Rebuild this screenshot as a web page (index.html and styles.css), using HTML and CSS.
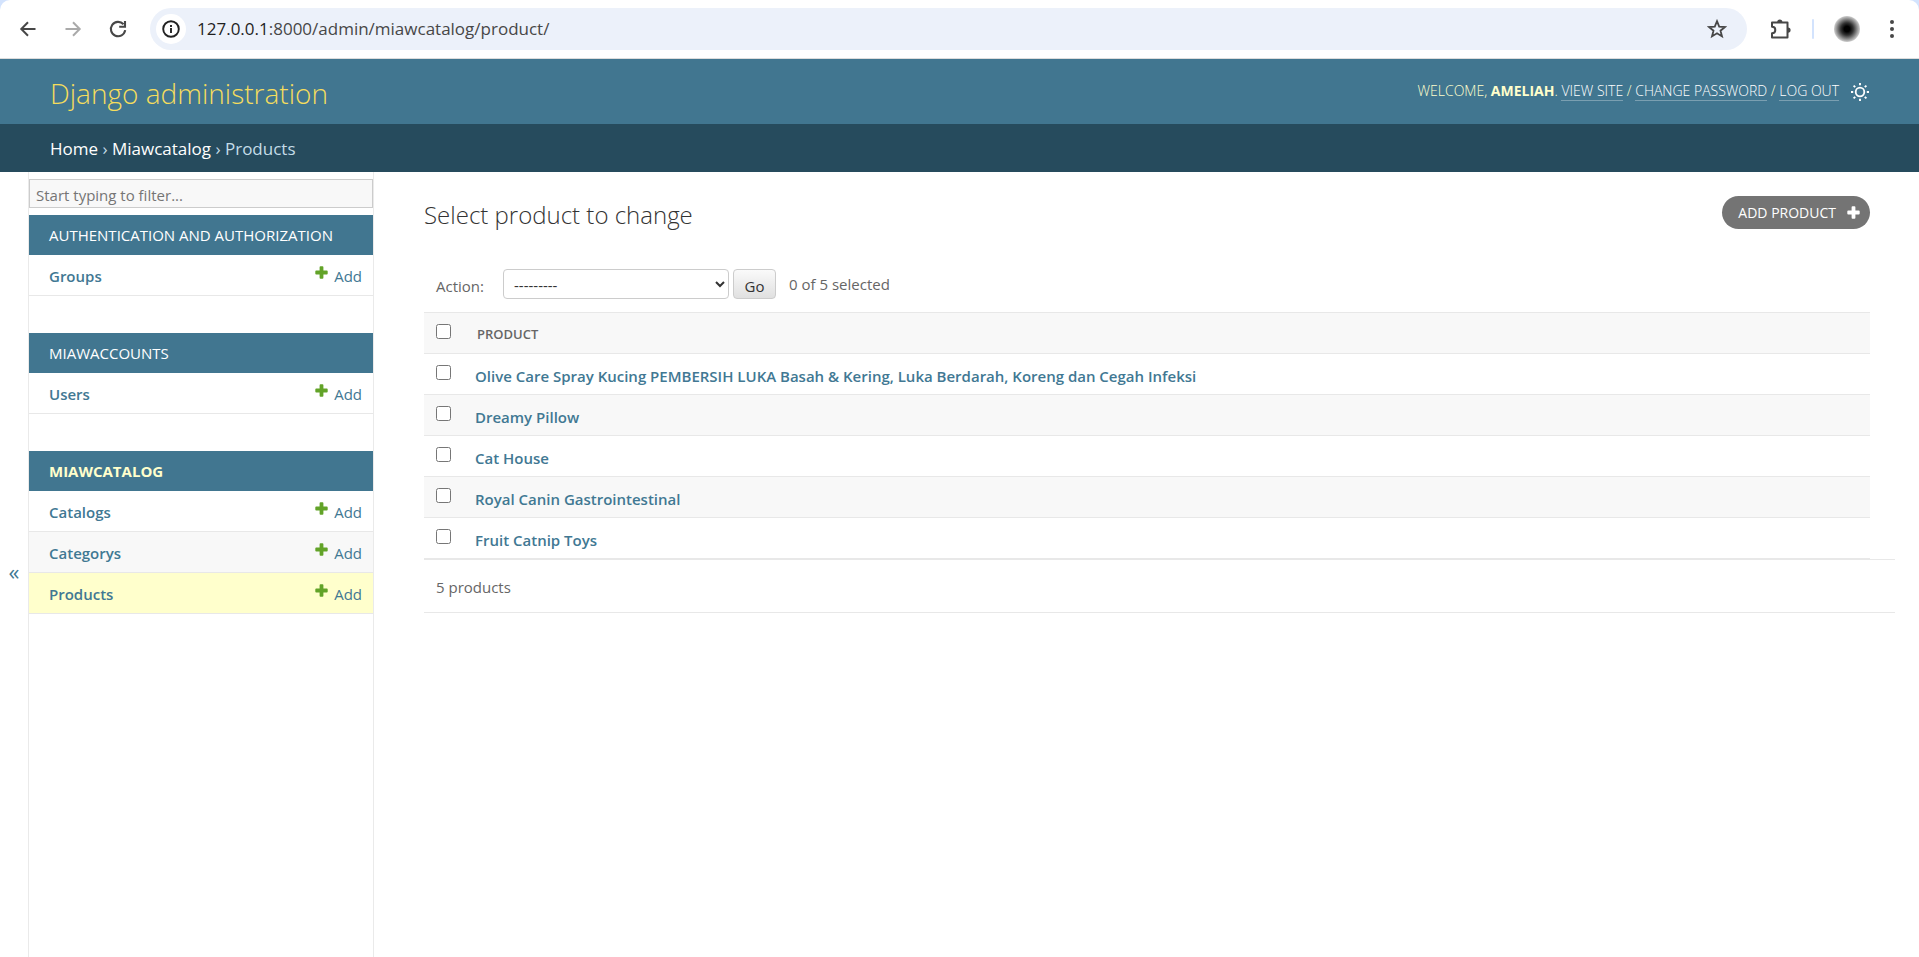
FILE: index.html
```html
<!DOCTYPE html>
<html lang="en">
<head>
<meta charset="utf-8">
<title>Select product to change | Django administration</title>
<link rel="stylesheet" href="styles.css">
</head>
<body>
<svg class="defs" aria-hidden="true">
  <symbol id="plus" viewBox="0 0 13 13"><path d="M4.6 1.2Q4.6.3 5.5.3h2q.9 0 .9.9v3.4h3.4q.9 0 .9.9v2q0 .9-.9.9H8.400v3.400q0 .9-.9.9h-2q-.9 0-.9-.9V8.400H1.200q-.9 0-.9-.9v-2q0-.9.9-.9h3.400z" fill="currentColor"/></symbol>
</svg>
<div class="browser">
  <div class="toolbar">
    <button class="tool" aria-label="Back"><svg viewBox="0 0 20 20" width="20" height="20"><path d="M17.500 10H3.500M10 3.300L3.300 10l6.700 6.700" fill="none" stroke="#474747" stroke-width="2"/></svg></button>
    <button class="tool" aria-label="Forward"><svg viewBox="0 0 20 20" width="20" height="20"><path d="M2.500 10h14M10 3.300l6.700 6.700-6.700 6.700" fill="none" stroke="#aaa" stroke-width="2"/></svg></button>
    <button class="tool" aria-label="Reload"><svg viewBox="0 0 20 20" width="20" height="20"><path d="M17.200 11.200A7.200 7.200 0 1 1 15.500 5.300M17 2v5.800h-5.800" fill="none" stroke="#474747" stroke-width="2.100"/></svg></button>
    <div class="omnibox">
      <button class="site-info" aria-label="Site information"><svg viewBox="0 0 18 18" width="18" height="18"><circle cx="9" cy="9" r="7.800" fill="none" stroke="#222" stroke-width="1.900"/><path d="M9 8v5M9 5v1.900" stroke="#222" stroke-width="1.900"/></svg></button>
      <p class="url"><b>127.0.0.1</b>:8000/admin/miawcatalog/product/</p>
      <button class="tool star" aria-label="Bookmark"><svg viewBox="0 0 20 20" width="20" height="20"><path d="M10 2.200l2.200 5.400 5.800.4-4.500 3.700 1.500 5.700-5-3.100-5 3.100 1.500-5.700L2 8l5.800-.4z" fill="none" stroke="#474747" stroke-width="1.800"/></svg></button>
    </div>
    <button class="tool ext" aria-label="Extensions"><svg viewBox="0 0 22 22" width="22" height="22"><path d="M2 4.500h15.500v15H2v-4.300c2 0 3.300-1.300 3.300-3.200S4 8.800 2 8.800z" fill="none" stroke="#474747" stroke-width="2" stroke-linejoin="round"/><path d="M7.200 4a2.600 2.600 0 0 1 5.200 0zM18 9.500a2.600 2.600 0 0 1 0 5.200z" fill="#474747"/></svg></button>
    <span class="separator"></span>
    <button class="avatar" aria-label="Profile"></button>
    <button class="tool menu" aria-label="Menu"><svg viewBox="0 0 20 20" width="20" height="20" fill="#474747"><circle cx="10" cy="3" r="2"/><circle cx="10" cy="10" r="2"/><circle cx="10" cy="17" r="2"/></svg></button>
  </div>
</div>
<header class="header">
  <a class="brand" href="#">Django administration</a>
  <div class="user-tools">
    <p>Welcome, <strong>ameliah</strong>. <a href="#">View site</a> / <a href="#">Change password</a> / <a href="#">Log out</a></p>
    <button class="theme" aria-label="Toggle theme"><svg viewBox="0 0 20 20" width="20" height="20"><circle cx="10" cy="10" r="4.300" fill="none" stroke="#fff" stroke-width="1.800"/><path d="M10 1v2.200M10 16.800V19M1 10h2.200M16.800 10H19M3.600 3.600l1.600 1.600M14.800 14.800l1.600 1.600M3.600 16.400l1.600-1.600M14.800 5.200l1.600-1.600" stroke="#fff" stroke-width="1.900"/></svg></button>
  </div>
</header>
<nav class="breadcrumbs" aria-label="Breadcrumbs"><a href="#">Home</a> › <a href="#">Miawcatalog</a> › Products</nav>
<div class="main">
  <button class="toggle" aria-label="Toggle navigation">«</button>
  <nav class="sidebar" aria-label="Sidebar">
    <input class="filter" type="search" placeholder="Start typing to filter..." aria-label="Filter navigation items">
    <section class="app">
      <h2><a href="#">Authentication and Authorization</a></h2>
      <ul>
        <li><a class="model" href="#">Groups</a><a class="add" href="#"><svg width="13" height="13"><use href="#plus"/></svg>Add</a></li>
      </ul>
    </section>
    <section class="app">
      <h2><a href="#">Miawaccounts</a></h2>
      <ul>
        <li><a class="model" href="#">Users</a><a class="add" href="#"><svg width="13" height="13"><use href="#plus"/></svg>Add</a></li>
      </ul>
    </section>
    <section class="app active">
      <h2><a href="#">Miawcatalog</a></h2>
      <ul>
        <li><a class="model" href="#">Catalogs</a><a class="add" href="#"><svg width="13" height="13"><use href="#plus"/></svg>Add</a></li>
        <li><a class="model" href="#">Categorys</a><a class="add" href="#"><svg width="13" height="13"><use href="#plus"/></svg>Add</a></li>
        <li class="current"><a class="model" href="#">Products</a><a class="add" href="#"><svg width="13" height="13"><use href="#plus"/></svg>Add</a></li>
      </ul>
    </section>
  </nav>
  <main class="content">
    <div class="title-row">
      <h1>Select product to change</h1>
      <a class="add-product" href="#">Add product<svg width="13" height="13"><use href="#plus"/></svg></a>
    </div>
    <form class="changelist">
      <div class="actions">
        <label for="action">Action:</label>
        <select id="action"><option>---------</option></select>
        <button type="button" class="go">Go</button>
        <span class="count">0 of 5 selected</span>
      </div>
      <table>
        <thead><tr><th class="check"><input type="checkbox" aria-label="Select all"></th><th scope="col">Product</th></tr></thead>
        <tbody>
          <tr><td class="check"><input type="checkbox" aria-label="Select Olive Care Spray"></td><td><a href="#">Olive Care Spray Kucing PEMBERSIH LUKA Basah &amp; Kering, Luka Berdarah, Koreng dan Cegah Infeksi</a></td></tr>
          <tr><td class="check"><input type="checkbox" aria-label="Select Dreamy Pillow"></td><td><a href="#">Dreamy Pillow</a></td></tr>
          <tr><td class="check"><input type="checkbox" aria-label="Select Cat House"></td><td><a href="#">Cat House</a></td></tr>
          <tr><td class="check"><input type="checkbox" aria-label="Select Royal Canin Gastrointestinal"></td><td><a href="#">Royal Canin Gastrointestinal</a></td></tr>
          <tr><td class="check"><input type="checkbox" aria-label="Select Fruit Catnip Toys"></td><td><a href="#">Fruit Catnip Toys</a></td></tr>
        </tbody>
      </table>
      <p class="paginator">5 products</p>
    </form>
  </main>
</div>
</body>
</html>
```
FILE: styles.css
```css
* { box-sizing: border-box; }
body {
  margin: 0;
  min-height: 100vh;
  display: flex;
  flex-direction: column;
  background: #fff;
  color: #666;
  font: 15px/20px "Open Sans", "Noto Sans", sans-serif;
}
h1, h2, p, ul { margin: 0; padding: 0; }
ul { list-style: none; }
a { color: #417893; text-decoration: none; }
button { font: inherit; border: 0; padding: 0; background: none; cursor: pointer; }
svg { display: block; flex: none; }
.defs { position: absolute; width: 0; height: 0; }

/* Browser toolbar */
.browser { background: #d3e3fd; }
.toolbar {
  display: flex;
  align-items: center;
  height: 59px;
  padding: 0 17px 0 18px;
  background: #fff;
  border-bottom: 1px solid #dcdcdc;
  border-radius: 10px 10px 0 0;
}
.tool { margin-right: 25px; }
.omnibox {
  flex: 1;
  display: flex;
  align-items: center;
  height: 42px;
  margin: 0 23px 0 -3px;
  padding: 0 20px 0 6px;
  border-radius: 21px;
  background: #ecf1fa;
}
.site-info {
  display: grid;
  place-items: center;
  width: 30px;
  height: 30px;
  margin-right: 11px;
  border-radius: 50%;
  background: #fff;
}
.url { flex: 1; font-size: 17px; color: #474747; }
.url b { font-weight: 400; color: #1f1f1f; }
.star { margin: 0; }
.ext { margin-right: 20px; }
.separator { width: 2px; height: 20px; margin-right: 20px; background: #d3e3fd; border-radius: 1px; }
.avatar {
  width: 26px;
  height: 26px;
  margin-right: 22px;
  border-radius: 50%;
  background: radial-gradient(circle, #000 15%, #333 34%, #888 54%, #ccc 70%);
}
.menu { margin: 0; }

/* Page header */
.header {
  display: flex;
  align-items: center;
  justify-content: space-between;
  height: 65px;
  padding: 0 49px 0 50px;
  background: #417690;
  color: #ffc;
}
.brand { padding-top: 2px; color: #f5dd5d; font-size: 28px; line-height: 36px; font-weight: 300; }
.user-tools {
  display: flex;
  align-items: center;
  gap: 11px;
  font-size: 14px;
  font-weight: 300;
  line-height: 16px;
  text-transform: uppercase;
}
.user-tools p { padding-bottom: 2px; }
.user-tools strong { font-weight: 700; }
.user-tools a { color: #fff; border-bottom: 1px solid #7a9fb1; }
.breadcrumbs {
  padding: 15px 50px 13px;
  background: #264b5d;
  color: #c4dce8;
  font-size: 17px;
}
.breadcrumbs a { color: #fff; }

/* Sidebar */
.main { flex: 1; display: flex; }
.toggle { width: 28px; padding-top: 12px; color: #417893; font-size: 22px; }
.sidebar {
  width: 346px;
  flex: none;
  padding-top: 7px;
  border: solid #eaeaea;
  border-width: 0 1px;
}
.filter {
  display: block;
  width: 100%;
  height: 29px;
  margin-bottom: 7px;
  padding: 2px 6px 0;
  border: 1px solid #ccc;
  border-radius: 0;
  background: #f8f8f8;
  font: inherit;
  appearance: none;
}
.filter::placeholder { color: #757575; }
.app { margin-bottom: 37px; }
.app h2 {
  padding: 10px 20px;
  background: #417690;
  font-size: 15px;
  font-weight: 400;
  text-transform: uppercase;
}
.app h2 a { color: #fff; }
.app.active h2 { font-weight: 700; }
.app.active h2 a { color: #ffc; }
.app li {
  display: flex;
  justify-content: space-between;
  padding: 11px 11px 9px 20px;
  border-bottom: 1px solid #e8e8e8;
}
.app li:nth-child(even) { background: #f8f8f8; }
.app li.current { background: #ffc; }
.model { font-weight: 600; }
.add { display: flex; gap: 6px; }
.add svg { color: #62a328; }

/* Change list */
.content { flex: 1; padding: 24px 24px 24px 50px; }
.title-row {
  display: flex;
  align-items: flex-start;
  justify-content: space-between;
  margin: 0 25px 38px 0;
}
h1 { padding-top: 2px; color: #333; font-size: 24px; line-height: 33px; font-weight: 300; }
.add-product {
  display: flex;
  align-items: center;
  gap: 11px;
  height: 33px;
  padding: 0 10px 0 16px;
  border-radius: 17px;
  background: #747474;
  color: #fff;
  font-size: 14px;
  text-transform: uppercase;
}
.actions { display: flex; align-items: center; padding: 0 12px 13px; }
.actions label { width: 67px; padding-top: 3px; }
.actions select {
  width: 226px;
  height: 30px;
  margin-right: 4px;
  padding: 2px 5px 0 6px;
  border: 1px solid #ccc;
  border-radius: 4px;
  background: #fff;
  color: #333;
  font: inherit;
}
.go {
  width: 43px;
  height: 30px;
  margin-right: 13px;
  padding-top: 3px;
  border: 1px solid #ccc;
  border-radius: 4px;
  background: linear-gradient(#fafafa, #e0e0e0);
  color: #333;
}
table { width: calc(100% - 25px); border-collapse: collapse; }
th, td { padding: 12px 0 8px; text-align: left; vertical-align: top; border-bottom: 1px solid #e8e8e8; }
th {
  padding: 11px 2px 9px;
  border-top: 1px solid #e8e8e8;
  background: #f8f8f8;
  font-size: 13px;
  font-weight: 600;
  text-transform: uppercase;
}
td a { font-weight: 600; }
.check { width: 51px; padding: 11px 0 0 12px; }
.check input { display: block; width: 15px; height: 15px; margin: 0; }
tbody tr:nth-child(even) { background: #f8f8f8; }
.paginator { padding: 17px 12px 15px; border: solid #e8e8e8; border-width: 1px 0; }
```
